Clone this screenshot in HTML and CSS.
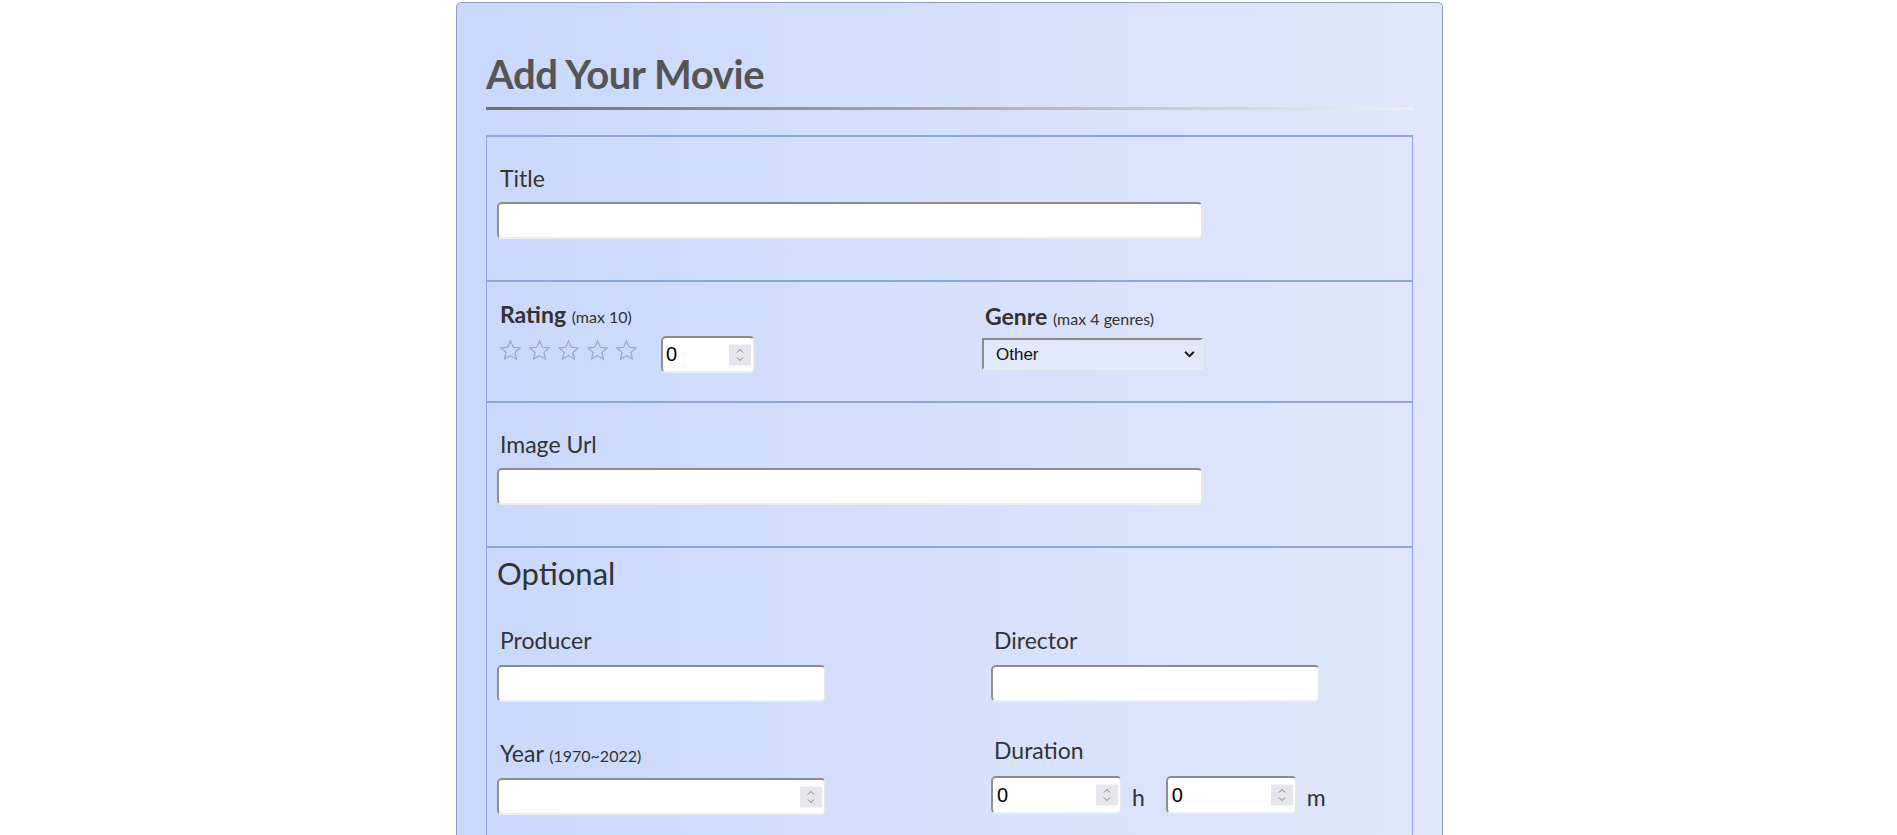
FILE: index.html
```html
<!DOCTYPE html>
<html lang="en">
<head>
<meta charset="utf-8">
<title>Add Your Movie</title>
<link rel="stylesheet" href="styles.css">
</head>
<body>
<div class="card">
  <h1 class="heading">Add Your Movie</h1>
  <div class="form">
    <div class="section basic">
      <label class="label">Title</label>
      <input class="text wide" type="text">
    </div>

    <div class="section rating-row">
      <div class="rating-col">
        <div class="label strong">Rating <small>(max 10)</small></div>
        <div class="rating-controls">
          <div class="stars">
            <svg class="star" viewBox="0 0 24 24"><polygon points="12,2 14.9,8.6 22,9.3 16.6,14 18.2,21 12,17.3 5.8,21 7.4,14 2,9.3 9.1,8.6"/></svg>
            <svg class="star" viewBox="0 0 24 24"><polygon points="12,2 14.9,8.6 22,9.3 16.6,14 18.2,21 12,17.3 5.8,21 7.4,14 2,9.3 9.1,8.6"/></svg>
            <svg class="star" viewBox="0 0 24 24"><polygon points="12,2 14.9,8.6 22,9.3 16.6,14 18.2,21 12,17.3 5.8,21 7.4,14 2,9.3 9.1,8.6"/></svg>
            <svg class="star" viewBox="0 0 24 24"><polygon points="12,2 14.9,8.6 22,9.3 16.6,14 18.2,21 12,17.3 5.8,21 7.4,14 2,9.3 9.1,8.6"/></svg>
            <svg class="star" viewBox="0 0 24 24"><polygon points="12,2 14.9,8.6 22,9.3 16.6,14 18.2,21 12,17.3 5.8,21 7.4,14 2,9.3 9.1,8.6"/></svg>
          </div>
          <span class="num rating-num">
            <input type="number" value="0">
            <span class="spin"><svg viewBox="0 0 22 21"><path d="M8 8 L11 5 L14 8 M8 13 L11 16 L14 13"/></svg></span>
          </span>
        </div>
      </div>
      <div class="genre-col">
        <div class="label strong">Genre <small>(max 4 genres)</small></div>
        <span class="select-wrap">
          <select><option>Other</option></select>
          <svg class="chev" viewBox="0 0 10 6"><path d="M1 1 L5 5 L9 1"/></svg>
        </span>
      </div>
    </div>

    <div class="section basic">
      <label class="label">Image Url</label>
      <input class="text wide" type="text">
    </div>

    <div class="section optional">
      <h2 class="opt-title">Optional</h2>
      <div class="opt-grid">
        <div class="field">
          <label class="label">Producer</label>
          <input class="text half" type="text">
        </div>
        <div class="field">
          <label class="label">Director</label>
          <input class="text half" type="text">
        </div>
        <div class="field">
          <label class="label">Year <small>(1970~2022)</small></label>
          <span class="num year-num">
            <input type="number">
            <span class="spin"><svg viewBox="0 0 22 21"><path d="M8 8 L11 5 L14 8 M8 13 L11 16 L14 13"/></svg></span>
          </span>
        </div>
        <div class="field duration">
          <label class="label">Duration</label>
          <div class="dur">
            <span class="num dur-num">
              <input type="number" value="0">
              <span class="spin"><svg viewBox="0 0 22 21"><path d="M8 8 L11 5 L14 8 M8 13 L11 16 L14 13"/></svg></span>
            </span>
            <span class="unit">h</span>
            <span class="num dur-num">
              <input type="number" value="0">
              <span class="spin"><svg viewBox="0 0 22 21"><path d="M8 8 L11 5 L14 8 M8 13 L11 16 L14 13"/></svg></span>
            </span>
            <span class="unit">m</span>
          </div>
        </div>
      </div>
    </div>
  </div>
</div>
</body>
</html>
```

FILE: styles.css
```css
* { box-sizing: border-box; }
html, body { margin: 0; padding: 0; background: #ffffff; }
body { font-family: Lato, "Noto Sans", sans-serif; color: #333; }

.card {
  width: 987px;
  margin: 2px 0 0 calc(50% - 492.5px);
  padding: 0 29px 80px;
  border: 1px solid #8e9bc3;
  border-radius: 5px;
  background: linear-gradient(to right, #c9d8fb, #d7e1fb 55%, #e0e7fb);
}

.heading {
  margin: 47px 0 25px;
  padding-bottom: 12px;
  font-size: 40px;
  line-height: 48px;
  font-weight: 700;
  letter-spacing: -0.4px;
  color: #555;
  background: linear-gradient(to right, #707070, #a9a9ae 50%, #eef0f7) left bottom / 100% 3px no-repeat;
}

.form {
  border: 1px solid #8da6de;
  border-top-width: 2px;
}
.section + .section { border-top: 2px solid #8da6de; }

.section.basic { padding: 26px 10px 41px; }

.label {
  display: block;
  font-size: 23px;
  line-height: 30px;
  padding-left: 3px;
  margin-bottom: 9px;
  color: #333;
}
.label small { font-size: 16px; font-weight: 400; line-height: 1; }
.strong { font-weight: 700; }

.text {
  display: block;
  height: 37px;
  border: 2px solid;
  border-color: #8c8c8c #e4e6ea #eceef2 #909090;
  border-radius: 5px;
  background: #fff;
  padding: 0 4px;
  font: 20px "Liberation Sans", Arial, sans-serif;
  color: #000;
  outline: none;
}
.text.wide { width: 706px; }
.text.half { width: 329px; }

/* rating row */
.rating-row {
  display: grid;
  grid-template-columns: 486px 1fr;
  padding: 17px 10px 28px;
}
.rating-row .label { margin-bottom: 7px; }
.genre-col { padding-top: 2px; margin-left: -1px; }
.rating-controls { display: flex; align-items: flex-start; }
.stars { display: flex; gap: 6px; padding-left: 2px; margin-top: 3px; }
.star { width: 23px; height: 23px; display: block; }
.star polygon { fill: none; stroke: #9aa3bd; stroke-width: 1.2; stroke-linejoin: miter; }

.num { position: relative; display: inline-block; }
.num input {
  display: block;
  height: 37px;
  border: 2px solid;
  border-color: #8c8c8c #e4e6ea #eceef2 #909090;
  border-radius: 5px;
  background: #fff;
  padding: 0 3px;
  font: 20px "Liberation Sans", Arial, sans-serif;
  color: #000;
  outline: none;
  -moz-appearance: textfield;
}
.num input::-webkit-inner-spin-button,
.num input::-webkit-outer-spin-button { -webkit-appearance: none; margin: 0; }
.spin {
  position: absolute;
  right: 4px;
  top: 50%;
  transform: translateY(-50%);
  width: 22px;
  height: 21px;
  background: #e6e7ec;
}
.spin svg { display: block; width: 22px; height: 21px; }
.spin path { fill: none; stroke: #7a7a7a; stroke-width: 1; }

.rating-num { margin-left: 23px; }
.rating-num input { width: 94px; }

.select-wrap { position: relative; display: inline-block; }
.select-wrap select {
  -webkit-appearance: none;
  appearance: none;
  display: block;
  width: 221px;
  height: 32px;
  border: 2px solid;
  border-color: #8a8a8a #e6ebf8 #e6ebf8 #8e8e8e;
  border-radius: 0;
  background: #e1e8fb;
  padding: 0 0 0 12px;
  font: 17px "Liberation Sans", Arial, sans-serif;
  color: #111;
  outline: none;
}
.chev {
  position: absolute;
  right: 8px;
  top: 50%;
  width: 11px;
  height: 7px;
  transform: translateY(-50%);
}
.chev path { fill: none; stroke: #222; stroke-width: 1.9; }

/* optional */
.section.optional { padding: 5px 10px 60px; }
.opt-title {
  margin: 0 0 32px;
  font-size: 31px;
  line-height: 40px;
  font-weight: 400;
  color: #333;
}
.opt-grid {
  display: grid;
  grid-template-columns: 494px 1fr;
  row-gap: 36px;
}
.opt-grid .label { margin-bottom: 10px; }
.year-num input { width: 329px; }

.duration .label { margin-top: -3px; margin-bottom: 11px; }
.dur { display: flex; align-items: center; }
.dur-num input { width: 131px; height: 38px; padding-left: 4px; }
.unit {
  font-size: 23px;
  line-height: 30px;
  padding-top: 4px;
  margin: 0 21px 0 10px;
  color: #333;
}
.unit:last-child { margin-right: 0; }
```
